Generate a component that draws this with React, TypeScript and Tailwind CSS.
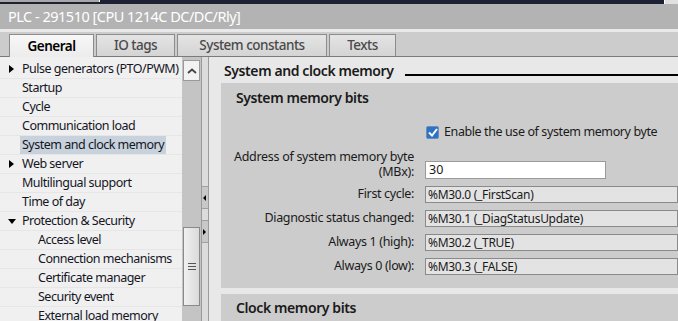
import React from 'react';

const font = { fontFamily: '"Noto Sans", "Open Sans", sans-serif' };

type Node = { label: string; level: number; arrow?: 'right' | 'down'; selected?: boolean };

const tree: Node[] = [
  { label: 'Pulse generators (PTO/PWM)', level: 1, arrow: 'right' },
  { label: 'Startup', level: 1 },
  { label: 'Cycle', level: 1 },
  { label: 'Communication load', level: 1 },
  { label: 'System and clock memory', level: 1, selected: true },
  { label: 'Web server', level: 1, arrow: 'right' },
  { label: 'Multilingual support', level: 1 },
  { label: 'Time of day', level: 1 },
  { label: 'Protection & Security', level: 1, arrow: 'down' },
  { label: 'Access level', level: 2 },
  { label: 'Connection mechanisms', level: 2 },
  { label: 'Certificate manager', level: 2 },
  { label: 'Security event', level: 2 },
  { label: 'External load memory', level: 2 },
];

const bits = [
  { label: 'First cycle:', value: '%M30.0 (_FirstScan)' },
  { label: 'Diagnostic status changed:', value: '%M30.1 (_DiagStatusUpdate)' },
  { label: 'Always 1 (high):', value: '%M30.2 (_TRUE)' },
  { label: 'Always 0 (low):', value: '%M30.3 (_FALSE)' },
];

const tabs = ['General', 'IO tags', 'System constants', 'Texts'];

function TreeRow({ node }: { node: Node }) {
  return (
    <div className="h-[19px] flex items-center border-b border-[#e6e6e6] relative whitespace-nowrap">
      {node.arrow === 'right' && (
        <span className="absolute left-[9px] top-[5px] w-0 h-0 border-y-[4px] border-y-transparent border-l-[5px] border-l-black" />
      )}
      {node.arrow === 'down' && (
        <span className="absolute left-[8px] top-[7px] w-0 h-0 border-x-[4px] border-x-transparent border-t-[5px] border-t-black" />
      )}
      <span
        className={`text-[12.5px] tracking-[-0.5px] leading-[18px] text-[#15151f] px-[2px] ${node.level === 2 ? 'ml-[36px]' : 'ml-[20px]'} ${node.selected ? 'bg-[#c7d2dc]' : ''}`}
      >
        {node.label}
      </span>
    </div>
  );
}

export default function App() {
  return (
    <div className="w-[678px] h-[321px] overflow-hidden flex flex-col bg-[#e8e8e8]" style={font}>
      {/* window top edge */}
      <div className="h-[4px] bg-[#1d2133] flex">
        <div className="w-[100px] h-[2px] bg-[#a8a8a8] border-r border-white" />
        <div className="flex-1" />
        <div className="w-[14px] h-[4px] border-l border-white bg-[#e0e0e0]" />
      </div>

      {/* title */}
      <div className="h-[25px] bg-[#b3b3b3] flex items-center px-[8px] text-white text-[14.5px] tracking-[-0.5px] whitespace-nowrap">
        PLC - 291510 [CPU 1214C DC/DC/Rly]
      </div>
      <div className="h-[3px] bg-[#e9e9e9]" />

      {/* tabs */}
      <div className="h-[25px] bg-[#cccccc] flex items-end pl-[9px] gap-[2px] border-b border-[#7a7a7a]">
        {tabs.map((t, i) => (
          <div
            key={t}
            className={`flex items-center justify-center border border-b-0 text-[13.5px] tracking-[-0.5px] whitespace-nowrap ${
              i === 0
                ? 'w-[85px] bg-gradient-to-b from-[#f7f7f7] to-[#ececec] border-[#8c8c8c] text-black font-semibold -mb-px h-[23px]'
                : 'h-[22px] bg-gradient-to-b from-[#e4e4e4] to-[#d4d4d4] border-[#8c8c8c] text-[#4a4a4a] font-medium'
            } ${i === 1 ? 'w-[79px]' : ''} ${i === 2 ? 'w-[150px]' : ''} ${i === 3 ? 'w-[67px]' : ''}`}
          >
            {t}
          </div>
        ))}
      </div>

      {/* body */}
      <div className="flex-1 flex min-h-0">
        {/* tree */}
        <div className="w-[182px] bg-[#f0f0f0] pt-[3px] overflow-hidden">
          {tree.map((n) => (
            <TreeRow key={n.label} node={n} />
          ))}
        </div>

        {/* scrollbar */}
        <div className="w-[19px] bg-[#c4c4c4] flex flex-col items-center pt-[3px]">
          <div className="w-[17px] h-[21px] bg-[#f2f2f2] border border-[#9a9a9a] flex items-center justify-center">
            <svg width="10" height="6" viewBox="0 0 10 6">
              <path d="M1 5 L5 1.5 L9 5" stroke="#444" strokeWidth="1.8" fill="none" />
            </svg>
          </div>
          <div className="h-[146px]" />
          <div className="w-[17px] h-[79px] border border-[#8a8a8a] bg-gradient-to-r from-[#f0f0f0] to-[#dadada] flex flex-col items-center justify-center gap-[2px]">
            <span className="w-[8px] h-px bg-[#555]" />
            <span className="w-[8px] h-px bg-[#555]" />
            <span className="w-[8px] h-px bg-[#555]" />
          </div>
        </div>

        {/* splitter */}
        <div className="w-[8px] bg-[#dcdcdc] border-x border-[#9a9a9a] flex flex-col pt-[129px]">
          <div className="h-[23px] bg-[#c8c8c8] border-y border-[#a0a0a0] flex items-center">
            <span className="w-0 h-0 border-y-[3px] border-y-transparent border-r-[3px] border-r-black ml-[1px]" />
          </div>
          <div className="h-[11px]" />
          <div className="h-[23px] bg-[#c8c8c8] border-y border-[#a0a0a0] flex items-center">
            <span className="w-0 h-0 border-y-[3px] border-y-transparent border-l-[3px] border-l-black ml-[1px]" />
          </div>
        </div>

        {/* properties */}
        <div className="flex-1 bg-[#e8e8e8] overflow-hidden pl-[12px] whitespace-nowrap">
          <div className="h-[26px] flex items-center">
            <span className="text-[14px] tracking-[-0.4px] font-semibold text-[#1a1a1a] ml-[3px]">System and clock memory</span>
            <span className="flex-1 h-[2px] bg-black ml-[11px] mt-[10px]" />
          </div>

          <div className="bg-[#cccccc] pt-[4px] pb-[13px]">
            <div className="text-[14px] tracking-[-0.4px] font-semibold text-[#1a1a1a] pl-[15px] h-[20px] flex items-center">
              System memory bits
            </div>
            <div className="flex items-center h-[22px] mt-[14px]">
              <div className="w-[205px]" />
              <span className="w-[13px] h-[13px] rounded-[2px] border border-[#6b8fb8] bg-[#2d73c4] flex items-center justify-center">
                <svg width="10" height="9" viewBox="0 0 10 9">
                  <path d="M1 4.5 L4 7.5 L9 1" stroke="#fff" strokeWidth="2" fill="none" />
                </svg>
              </span>
              <span className="ml-[5px] text-[12.5px] tracking-[-0.4px] text-[#1a1a1a]">Enable the use of system memory byte</span>
            </div>
            <div className="flex items-end h-[32px] mt-[4px]">
              <div className="w-[193px] flex flex-col items-end text-[12.5px] tracking-[-0.3px] text-[#1a1a1a]">
                <span className="h-[14px] leading-[14px]">Address of system memory byte</span>
                <span className="h-[15px] leading-[15px]">(MBx):</span>
              </div>
              <div className="ml-[11px] w-[181px] h-[18px] bg-white border border-[#9a9a9a] text-[12.5px] leading-[16px] pl-[3px] text-[#1a1a1a]">
                30
              </div>
            </div>
            <div className="flex flex-col gap-[7px] mt-[7px]">
              {bits.map((b) => (
                <div key={b.label} className="flex items-center h-[17px]">
                  <div className="w-[193px] text-right text-[12.5px] tracking-[-0.35px] text-[#1a1a1a]">{b.label}</div>
                  <div className="ml-[11px] flex-1 h-[17px] bg-[#e3e3e3] border border-[#8a8a8a] text-[12px] leading-[15px] pl-[2px] text-[#1a1a1a] tracking-[-0.3px]">
                    {b.value}
                  </div>
                </div>
              ))}
            </div>
          </div>

          <div className="h-[6px]" />
          <div className="bg-[#cccccc] pt-[3px] h-[40px]">
            <div className="text-[14px] tracking-[-0.4px] font-semibold text-[#1a1a1a] pl-[15px] h-[20px] flex items-center">
              Clock memory bits
            </div>
          </div>
        </div>
      </div>
    </div>
  );
}
